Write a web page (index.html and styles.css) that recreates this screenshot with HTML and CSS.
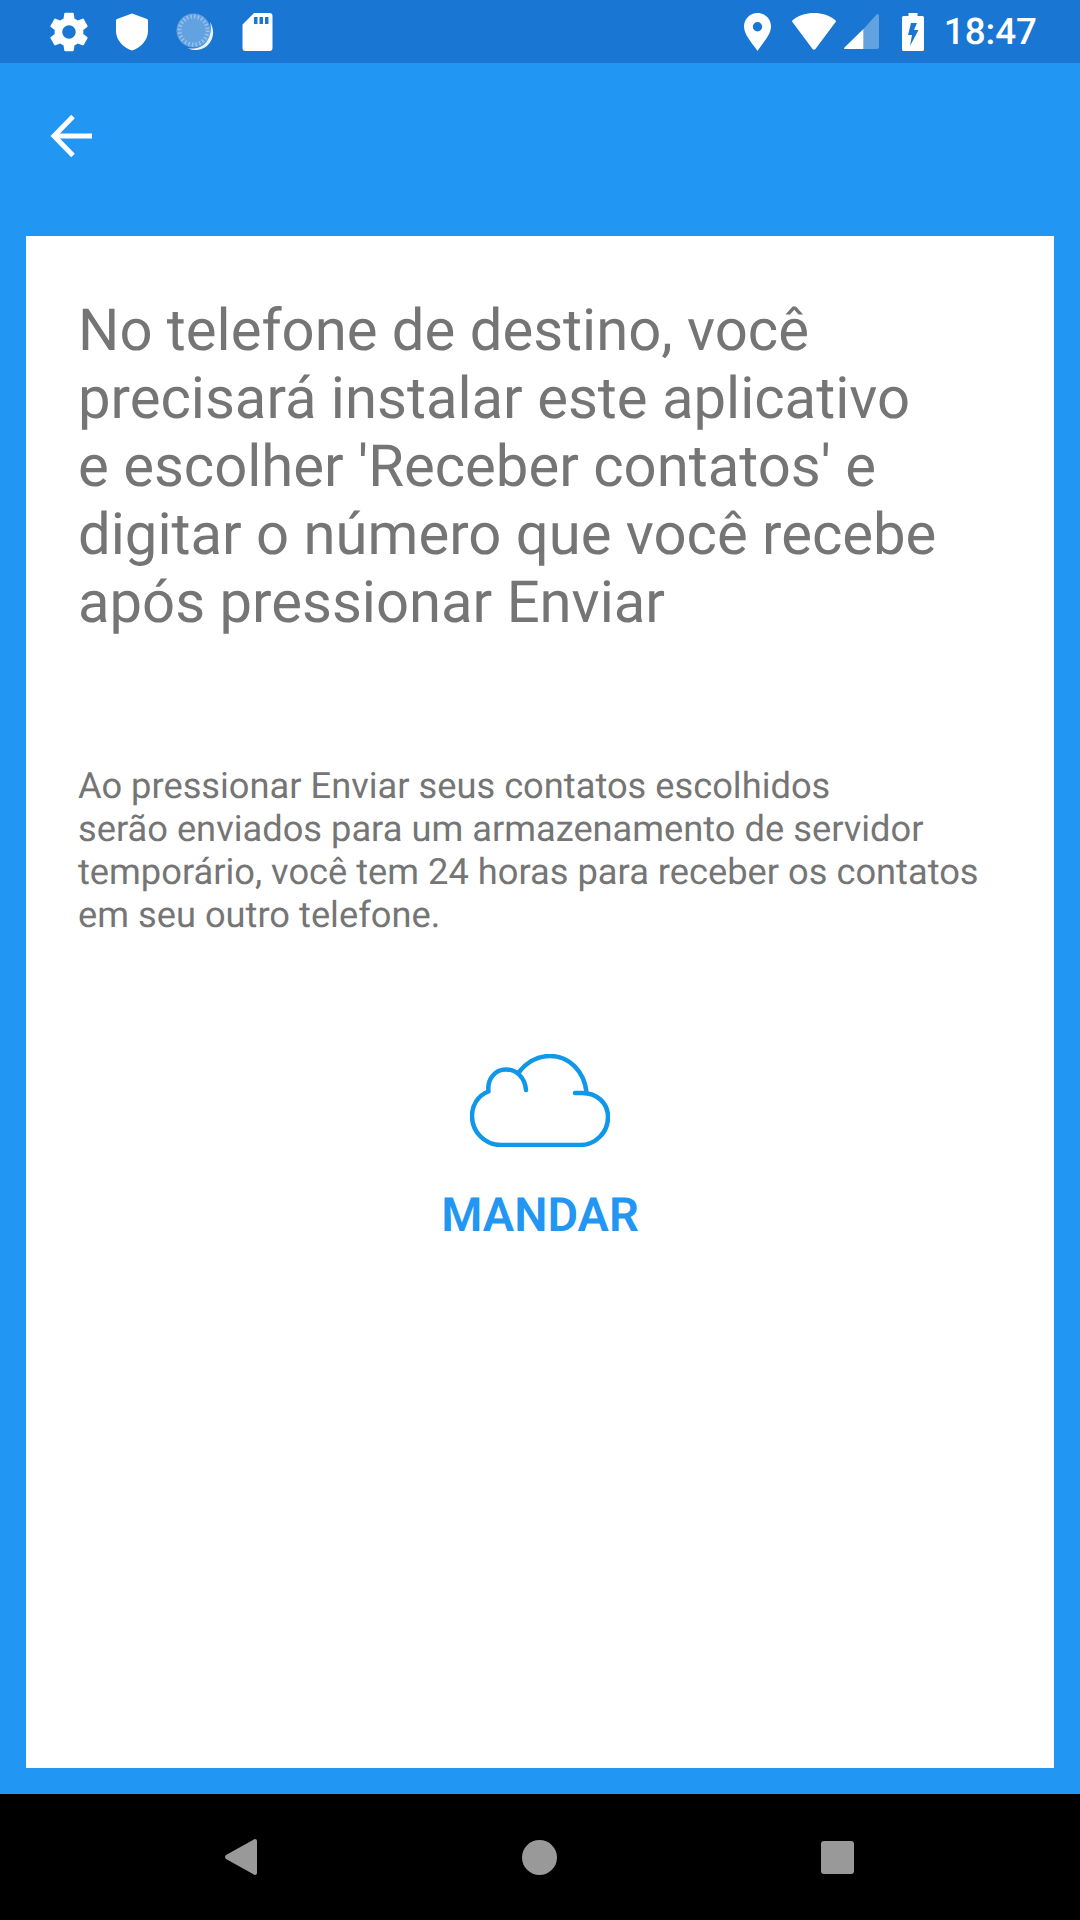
FILE: index.html
```html
<!doctype html>
<html lang="pt">
    <head>
        <meta charset="UTF-8" />
        <meta name="viewport" content="width=device-width, initial-scale=1.0" />
        <title>Mandar contatos</title>
        <link rel="stylesheet" href="styles.css">
    </head>
    <body>
        <div class="screen">
            <div class="status-bar">
                <div class="status-group">
                    <!-- settings gear -->
                    <svg class="icon-gear" viewBox="0 0 24 24"><path fill="#fff" d="M19.43 12.98c.04-.32.07-.64.07-.98s-.03-.66-.07-.98l2.11-1.65c.19-.15.24-.42.12-.64l-2-3.46c-.12-.22-.39-.3-.61-.22l-2.49 1c-.52-.4-1.08-.73-1.69-.98l-.38-2.65C14.46 2.18 14.25 2 14 2h-4c-.25 0-.46.18-.49.42l-.38 2.65c-.61.25-1.17.59-1.69.98l-2.49-1c-.23-.09-.49 0-.61.22l-2 3.46c-.13.22-.07.49.12.64l2.11 1.65c-.04.32-.07.65-.07.98s.03.66.07.98l-2.11 1.65c-.19.15-.24.42-.12.64l2 3.46c.12.22.39.3.61.22l2.49-1c.52.4 1.08.73 1.69.98l.38 2.65c.03.24.24.42.49.42h4c.25 0 .46-.18.49-.42l.38-2.65c.61-.25 1.17-.59 1.69-.98l2.49 1c.23.09.49 0 .61-.22l2-3.46c.12-.22.07-.49-.12-.64l-2.11-1.65zM12 15.5c-1.93 0-3.5-1.57-3.5-3.5s1.57-3.5 3.5-3.5 3.5 1.57 3.5 3.5-1.57 3.5-3.5 3.5z"/></svg>
                    <!-- shield -->
                    <svg class="icon-shield" viewBox="0 0 32 38"><path fill="#fff" d="M16 0.5 L31 6 Q32 6.4 32 7.5 V18 C32 27 25 34.500 16 37.500 C7 34.500 0 27 0 18 V7.500 Q0 6.400 1 6 Z"/></svg>
                    <!-- sync dial -->
                    <svg class="icon-dial" viewBox="0 0 38 38">
                        <circle cx="17.5" cy="17.5" r="17" fill="#fff" fill-opacity="0.32"/>
                        <circle cx="17.5" cy="17.5" r="14" fill="none" stroke="#fff" stroke-opacity="0.35" stroke-width="4" stroke-dasharray="1.5 2.17"/>
                        <path fill="#fff" fill-opacity="0.9" d="M34 9 C39 17 38 27 31 33 C25 38 17 38 11 35 C19 37 27 34 31 28 C35 22 35.500 15 34 9 Z"/>
                    </svg>
                    <!-- sd card -->
                    <svg class="icon-sd" viewBox="0 0 30 38"><path fill="#fff" fill-rule="evenodd" d="M11.5 0 H27 Q30 0 30 3 V35 Q30 38 27 38 H3 Q0 38 0 35 V11.500 Z M11.500 4 V11 H15 V4 Z M17 4 V11 H20.500 V4 Z M22.500 4 V11 H26 V4 Z"/></svg>
                </div>
                <div class="status-group status-right">
                    <!-- location pin -->
                    <svg class="icon-pin" viewBox="0 0 27 38"><path fill="#fff" fill-rule="evenodd" d="M13.500 0 C21 0 27 6 27 13.500 C27 22 18 31 13.500 38 C9 31 0 22 0 13.500 C0 6 6 0 13.500 0 Z M13.500 9 A4.700 4.700 0 1 0 13.500 18.400 A4.700 4.700 0 1 0 13.500 9 Z"/></svg>
                    <!-- wifi -->
                    <svg class="icon-wifi" viewBox="0 0 46 38"><path fill="#fff" d="M23 0 C31 0 39 2.500 45 7.500 Q46 8.500 45 9.500 L24.500 37 Q23 38.500 21.500 37 L1 9.500 Q0 8.500 1 7.500 C7 2.500 15 0 23 0 Z"/></svg>
                    <!-- cell signal -->
                    <svg class="icon-signal" viewBox="0 0 36 36">
                        <path fill="#fff" fill-opacity="0.32" d="M34 0 Q36 0 36 2 V34 Q36 36 34 36 H20 V15.500 Z"/>
                        <path fill="#fff" d="M20 15.500 V36 H1 Q-0.500 36 0.500 34.500 Z"/>
                    </svg>
                    <!-- charging battery -->
                    <svg class="icon-battery" viewBox="0 0 22 38"><path fill="#fff" fill-rule="evenodd" d="M6.500 0 H15.500 V3 H20.500 Q22 3 22 4.500 V36.500 Q22 38 20.500 38 H1.500 Q0 38 0 36.500 V4.500 Q0 3 1.500 3 H6.500 Z M9 10 L6 22 H10 L8 33 L16.500 17 H12 L15 10 Z"/></svg>
                    <span class="clock">18:47</span>
                </div>
            </div>

            <div class="app-bar">
                <svg class="icon-back" viewBox="0 0 42 42"><path fill="none" stroke="#fff" stroke-width="5" d="M42 21 H4 M23 1.500 L4 21 L23 40.500"/></svg>
            </div>

            <div class="content">
                <div class="card">
                    <h1 class="headline">No telefone de destino, você<br>precisará instalar este aplicativo<br>e escolher 'Receber contatos' e<br>digitar o número que você recebe<br>após pressionar Enviar</h1>
                    <p class="notice">Ao pressionar Enviar seus contatos escolhidos<br>serão enviados para um armazenamento de servidor<br>temporário, você tem 24 horas para receber os contatos<br>em seu outro telefone.</p>
                    <div class="send">
                        <svg class="icon-cloud" viewBox="0 0 140 93"><path fill="none" stroke="#0f97ea" stroke-width="4.500" stroke-linecap="round" stroke-linejoin="round" d="M56 36 C55 24 47 15.500 36 15.500 C25 15.500 17 25 18.500 37.500 C8 41.500 2 51 2 62 C2 78 15 91 31 91 H110 C125 91 138 79 138 63 C138 49 127 39 112 39 H105 M49 18 C57 8 68 2 80 2 C99 2 114 17 116.500 38"/></svg>
                        <span class="send-label">MANDAR</span>
                    </div>
                </div>
            </div>

            <div class="nav-bar">
                <svg class="nav-back" viewBox="0 0 32 36"><path fill="#999" d="M30 0 Q32 0 32 2 V34 Q32 36 30 36 Q29 36 28 35 L1 20 Q-1 18 1 16 L28 1 Q29 0 30 0 Z"/></svg>
                <div class="nav-home"></div>
                <div class="nav-recent"></div>
            </div>
        </div>
    </body>
</html>
```

FILE: styles.css
```css
html,
body {
    height: 100%;
    margin: 0;
    font-family: Roboto, "Liberation Sans", sans-serif;
    text-rendering: geometricPrecision;
}
.screen {
    display: flex;
    flex-direction: column;
    width: 1080px;
    height: 1920px;
    background: #2196f3;
}
.status-bar {
    display: flex;
    justify-content: space-between;
    align-items: center;
    flex: none;
    height: 63px;
    padding: 0 43px 0 46px;
    background: #1976d2;
    box-sizing: border-box;
}
.status-group {
    display: flex;
    align-items: center;
}
.status-group svg {
    display: block;
    flex: none;
}
.icon-gear {
    width: 46px;
    height: 46px;
}
.icon-shield {
    width: 32px;
    height: 38px;
    margin-left: 24px;
}
.icon-dial {
    width: 38px;
    height: 38px;
    margin-left: 28px;
}
.icon-sd {
    width: 31px;
    height: 38px;
    margin-left: 28px;
}
.icon-pin {
    width: 27px;
    height: 38px;
}
.icon-wifi {
    width: 46px;
    height: 37px;
    margin-left: 20px;
}
.icon-signal {
    width: 35px;
    height: 35px;
    margin-left: 7px;
}
.icon-battery {
    width: 22px;
    height: 38px;
    margin-left: 23px;
}
.clock {
    margin-left: 20px;
    color: #fff;
    font-size: 36.75px;
    font-weight: 500;
}
.app-bar {
    flex: none;
    height: 173px;
    padding: 52px 0 0 50px;
    box-sizing: border-box;
}
.icon-back {
    display: block;
    width: 42px;
    height: 42px;
}
.content {
    flex: none;
    height: 1558px;
    padding: 0 26px;
    box-sizing: border-box;
}
.card {
    height: 1532px;
    padding: 61px 52px 0;
    background: #fff;
    box-sizing: border-box;
}
.headline {
    margin: 0;
    color: #757575;
    font-size: 58px;
    font-weight: 400;
    line-height: 68px;
    white-space: nowrap;
}
.notice {
    margin: 127px 0 0;
    color: #757575;
    font-size: 36.25px;
    line-height: 43px;
    white-space: nowrap;
}
.send {
    display: flex;
    flex-direction: column;
    align-items: center;
    margin-top: 118px;
}
.icon-cloud {
    width: 140px;
    height: 93px;
}
.send-label {
    margin-top: 42px;
    color: #2196f3;
    font-size: 47px;
    font-weight: 600;
    line-height: 54px;
}
.nav-bar {
    flex: none;
    display: flex;
    align-items: center;
    height: 126px;
    background: #000;
}
.nav-back {
    flex: none;
    width: 32px;
    height: 36px;
    margin-left: 225px;
}
.nav-home {
    width: 35px;
    height: 35px;
    margin-left: 265px;
    border-radius: 50%;
    background: #999;
}
.nav-recent {
    width: 33px;
    height: 33px;
    margin-left: 264px;
    border-radius: 3px;
    background: #999;
}
```
